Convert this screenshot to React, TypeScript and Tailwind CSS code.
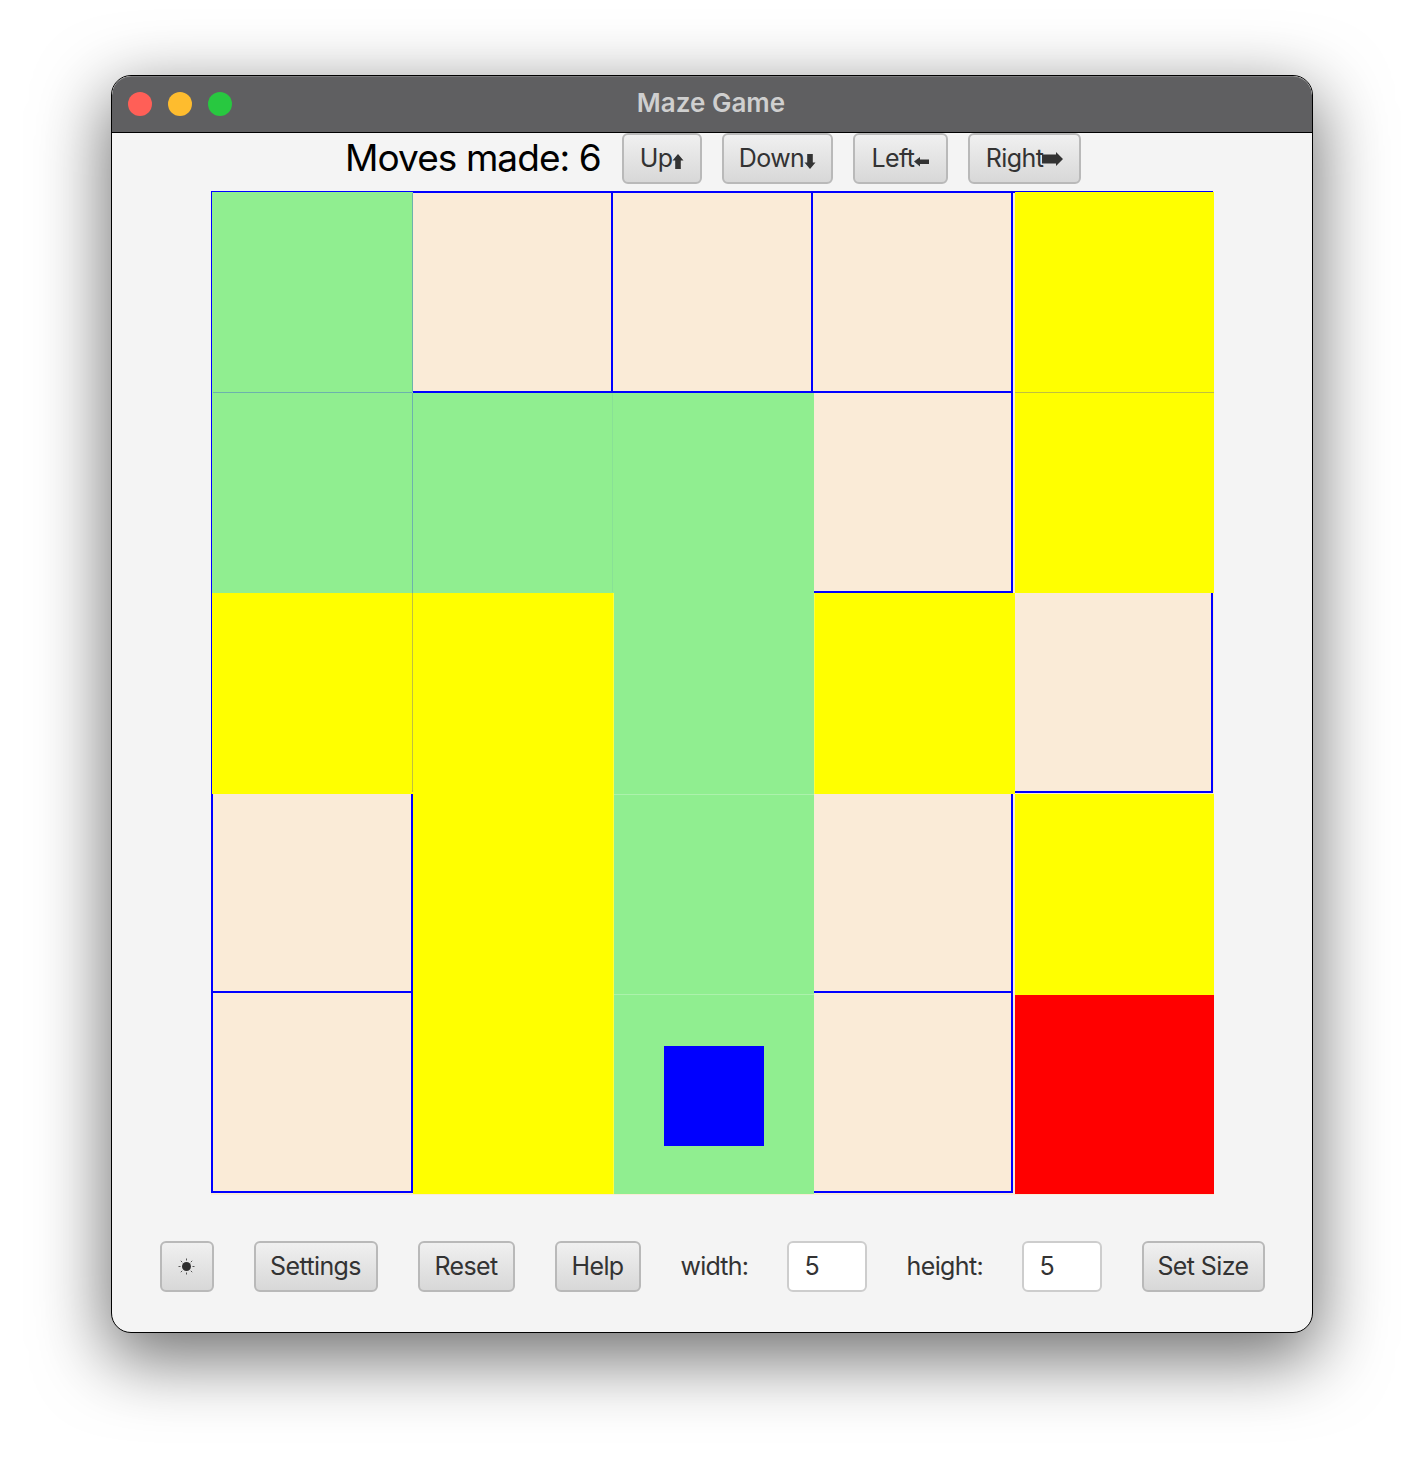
const G = '#90ee90'
const Y = '#ffff00'
const R = '#ff0000'

const board = [
  [G, null, null, null, Y],
  [G, G, G, null, Y],
  [Y, Y, G, Y, null],
  [null, Y, G, null, Y],
  [null, Y, G, null, R],
]

const cellClass: Record<string, string> = {
  [G]: 'bg-[#90ee90]',
  [Y]: 'bg-[#ffff00]',
  [R]: 'bg-[#ff0000]',
}

// [x1, y1, x2, y2] relative to the board, drawn under the coloured cells
const walls = [
  [1, 1, 1001, 1],
  [1, 1, 1, 1001],
  [201, 1, 201, 401],
  [201, 601, 201, 1001],
  [401, 1, 401, 201],
  [601, 1, 601, 201],
  [801, 1, 801, 401],
  [801, 601, 801, 1001],
  [1001, 401, 1001, 601],
  [201, 201, 801, 201],
  [601, 401, 801, 401],
  [801, 601, 1001, 601],
  [1, 801, 201, 801],
  [601, 801, 801, 801],
  [1, 1001, 201, 1001],
  [601, 1001, 801, 1001],
]

function Btn({ w, children }: { w: string; children: React.ReactNode }) {
  return (
    <button
      className={`${w} h-[51px] flex items-center justify-center rounded-[6px] border-2 border-[#b9b9b9] bg-gradient-to-b from-[#f0f0f0] to-[#d8d8d8] text-[25px] tracking-[-0.6px] text-[#333]`}
    >
      {children}
    </button>
  )
}

function Field({ w }: { w: string }) {
  return (
    <div className={`${w} h-[51px] flex items-center rounded-[6px] border-2 border-[#cdcdcd] bg-white pl-[16px] text-[25px] text-[#333]`}>
      5
    </div>
  )
}

function Arrow({ dir }: { dir: 'up' | 'down' | 'left' | 'right' }) {
  if (dir === 'up' || dir === 'down') {
    return (
      <svg width="12" height="15" viewBox="0 0 12 15" className="mt-[5px]">
        <path
          fill="#333"
          d={dir === 'up' ? 'M6 0 11.5 6.5H8.8V15H3.2V6.5H.5Z' : 'M6 15 11.5 8.5H8.8V0H3.2V8.5H.5Z'}
        />
      </svg>
    )
  }
  if (dir === 'left') {
    return (
      <svg width="15" height="11" viewBox="0 0 15 11" className="mt-[6px]">
        <path fill="#333" d="M0 5.5 6 1V3.5H15V8H6V10.5Z" />
      </svg>
    )
  }
  return (
    <svg width="21" height="14" viewBox="0 0 21 14" className="-ml-px mt-px">
      <path fill="#333" d="M21 7 14 0V2.5H0V11.5H14V14Z" />
    </svg>
  )
}

function Sun() {
  return (
    <svg width="17" height="17" viewBox="0 0 17 17">
      <circle cx="8.5" cy="8.5" r="4.5" fill="#2e2e2e" />
      <path
        stroke="#555"
        strokeWidth="1"
        d="M8.5 0.5v2M8.5 14.5v2M0.5 8.5h2M14.5 8.5h2M2.8 2.8l1.4 1.4M12.8 12.8l1.4 1.4M2.8 14.2l1.4-1.4M12.8 4.2l1.4-1.4"
      />
    </svg>
  )
}

export default function App() {
  return (
    <div className="min-h-[1480px] bg-white pt-[75px] font-['Inter','Liberation_Sans',sans-serif]">
      <div className="mx-auto flex h-[1258px] w-[1202px] flex-col overflow-hidden rounded-[20px] border border-black bg-[#f4f4f4] shadow-[0_22px_70px_4px_rgba(0,0,0,0.56)]">
        <div className="relative flex h-[57px] shrink-0 items-center justify-center rounded-t-[19px] border-b border-black bg-[#5f5f61] pb-[4px] pr-[2px] shadow-[inset_0_1px_0_rgba(255,255,255,0.18)]">
          <div className="absolute left-[16px] top-[16px] flex gap-4">
            <span className="h-6 w-6 rounded-full bg-[#ff5f57]" />
            <span className="h-6 w-6 rounded-full bg-[#febc2e]" />
            <span className="h-6 w-6 rounded-full bg-[#28c840]" />
          </div>
          <span className="text-[26px] font-semibold text-[#cfcfcf]">Maze Game</span>
        </div>

        <div className="flex h-[51px] shrink-0 items-center justify-center pl-[2px]">
          <span className="mb-[2px] mr-[22px] w-[255px] whitespace-nowrap text-[37px] tracking-[-0.93px] text-black">Moves made: 6</span>
          <div className="flex gap-5">
            <Btn w="w-[80px]">
              Up
              <Arrow dir="up" />
            </Btn>
            <Btn w="w-[111px]">
              Down
              <Arrow dir="down" />
            </Btn>
            <Btn w="w-[95px]">
              Left
              <Arrow dir="left" />
            </Btn>
            <Btn w="w-[113px]">
              Right
              <Arrow dir="right" />
            </Btn>
          </div>
        </div>

        <div className="relative ml-[99px] mt-[7px] h-[1004px] w-[1003px] shrink-0 bg-[#faebd7]">
          <svg className="absolute left-0 top-0" width="1003" height="1004">
            {walls.map(([x1, y1, x2, y2], i) => (
              <line key={i} x1={x1} y1={y1} x2={x2} y2={y2} stroke="#0000ff" strokeWidth="2" strokeLinecap="square" />
            ))}
          </svg>
          <div className="absolute left-px top-px grid grid-cols-[201px_201px_200px_201px_199px] grid-rows-[201px_200px_201px_201px_199px]">
            {board.flatMap((row, r) =>
              row.map((c, i) => (
                <div key={`${r}-${i}`} className={`relative ${c ? cellClass[c] : ''}`}>
                  {r === 4 && i === 2 && (
                    <div className="ml-[50px] mt-[51px] h-[100px] w-[100px] bg-[#0000ff]" />
                  )}
                </div>
              )),
            )}
          </div>
          <svg className="absolute left-0 top-0" width="1003" height="1004">
            <path stroke="#0000ff" strokeOpacity="0.25" d="M201.5 2V201M201.5 202V601M2 201.5H201M804 201.5H1003" />
            <path stroke="#0000ff" strokeOpacity="0.05" d="M401.5 202V401" />
            <path stroke="#ffffff" strokeOpacity="0.25" d="M402.5 402V1003M403 603.5H603M403 803.5H603M603.5 402V603" />
          </svg>
        </div>

        <div className="mt-[46px] flex items-center justify-center gap-10">
          <Btn w="w-[54px]">
            <Sun />
          </Btn>
          <Btn w="w-[124px]">Settings</Btn>
          <Btn w="w-[97px]">Reset</Btn>
          <Btn w="w-[86px]">Help</Btn>
          <span className="w-[66px] whitespace-nowrap text-[25px] tracking-[-0.8px] text-[#333]">width:</span>
          <Field w="w-[80px]" />
          <span className="w-[75px] whitespace-nowrap text-[25px] tracking-[-0.6px] text-[#333]">height:</span>
          <Field w="w-[80px]" />
          <Btn w="w-[123px]">Set Size</Btn>
        </div>
      </div>
    </div>
  )
}
